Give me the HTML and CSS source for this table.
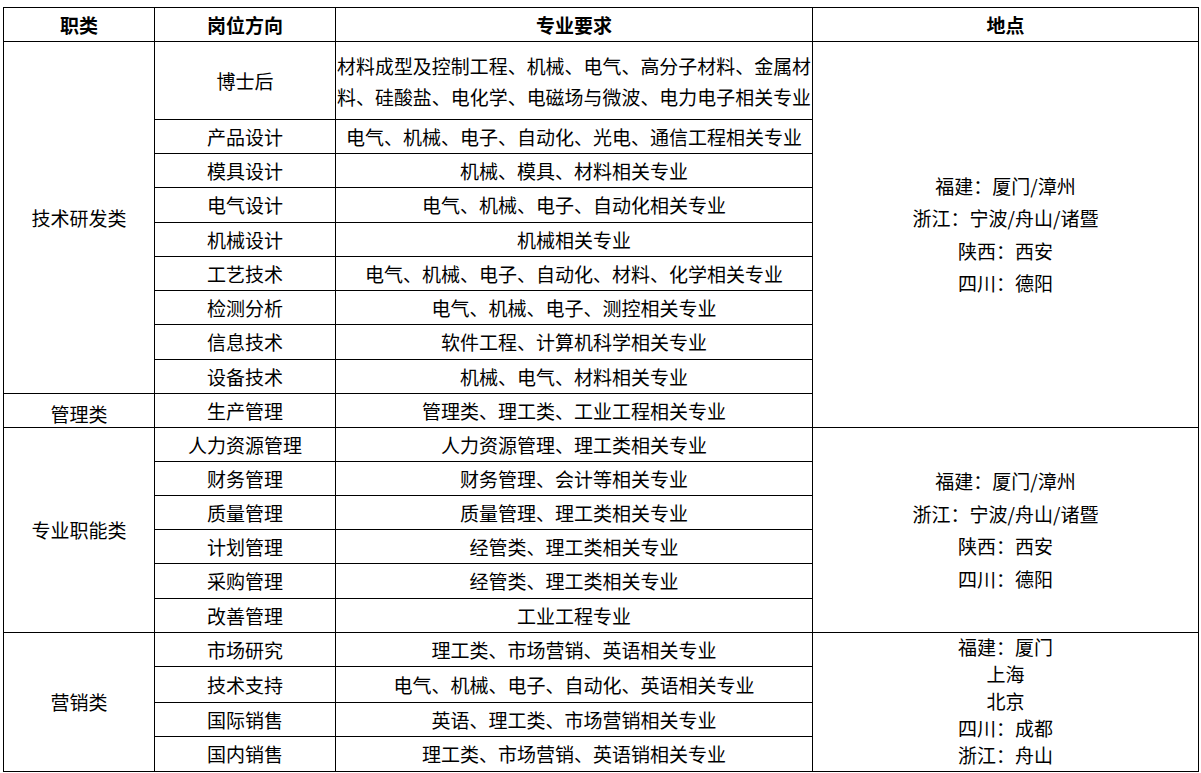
FILE: index.html
```html
<!DOCTYPE html>
<html lang="zh">
<head>
<meta charset="utf-8">
<link rel="stylesheet" href="styles.css">
<title>岗位</title>
</head>
<body>
<div class="sheet">
<table class="jobs">
<colgroup><col class="c1"><col class="c2"><col class="c3"><col class="c4"></colgroup>
<thead>
<tr class="h"><th>职类</th><th>岗位方向</th><th>专业要求</th><th>地点</th></tr>
</thead>
<tbody>
<tr class="tall"><td rowspan="9">技术研发类</td><td>博士后</td><td class="just">材料成型及控制工程、机械、电气、高分子材料、金属材<br>料、硅酸盐、电化学、电磁场与微波、电力电子相关专业</td>
<td rowspan="10" class="loc">福建：厦门/漳州<br>浙江：宁波/舟山/诸暨<br>陕西：西安<br>四川：德阳</td></tr>
<tr class="r"><td>产品设计</td><td>电气、机械、电子、自动化、光电、通信工程相关专业</td></tr>
<tr class="r"><td>模具设计</td><td>机械、模具、材料相关专业</td></tr>
<tr class="r5"><td>电气设计</td><td>电气、机械、电子、自动化相关专业</td></tr>
<tr class="r"><td>机械设计</td><td>机械相关专业</td></tr>
<tr class="r"><td>工艺技术</td><td>电气、机械、电子、自动化、材料、化学相关专业</td></tr>
<tr class="r"><td>检测分析</td><td>电气、机械、电子、测控相关专业</td></tr>
<tr class="r5"><td>信息技术</td><td>软件工程、计算机科学相关专业</td></tr>
<tr class="r"><td>设备技术</td><td>机械、电气、材料相关专业</td></tr>
<tr class="r"><td class="low">管理类</td><td>生产管理</td><td>管理类、理工类、工业工程相关专业</td></tr>
<tr class="r"><td rowspan="6">专业职能类</td><td>人力资源管理</td><td>人力资源管理、理工类相关专业</td>
<td rowspan="6" class="loc">福建：厦门/漳州<br>浙江：宁波/舟山/诸暨<br>陕西：西安<br>四川：德阳</td></tr>
<tr class="r"><td>财务管理</td><td>财务管理、会计等相关专业</td></tr>
<tr class="r"><td>质量管理</td><td>质量管理、理工类相关专业</td></tr>
<tr class="r"><td>计划管理</td><td>经管类、理工类相关专业</td></tr>
<tr class="r5"><td>采购管理</td><td>经管类、理工类相关专业</td></tr>
<tr class="r"><td>改善管理</td><td>工业工程专业</td></tr>
<tr class="r"><td rowspan="4">营销类</td><td>市场研究</td><td>理工类、市场营销、英语相关专业</td>
<td rowspan="4" class="loc small">福建：厦门<br>上海<br>北京<br>四川：成都<br>浙江：舟山</td></tr>
<tr class="r5"><td>技术支持</td><td>电气、机械、电子、自动化、英语相关专业</td></tr>
<tr class="r"><td>国际销售</td><td>英语、理工类、市场营销相关专业</td></tr>
<tr class="r"><td>国内销售</td><td>理工类、市场营销、英语销相关专业</td></tr>
</tbody>
</table>
</div>
</body>
</html>
```
FILE: styles.css
```css
html, body {
  margin: 0;
  padding: 0;
  background: #fff;
}
.sheet {
  padding: 7px 0 0 3px;
}
.jobs {
  border-collapse: collapse;
  table-layout: fixed;
  width: 1195px;
  font-family: "Noto Sans CJK SC", "Noto Sans", sans-serif;
  font-size: 19px;
  color: #000;
}
.c1 { width: 151px; }
.c2 { width: 181px; }
.c3 { width: 477px; }
.c4 { width: 386px; }
.jobs th, .jobs td {
  border: 1px solid #000;
  padding: 0;
  text-align: center;
  vertical-align: middle;
  line-height: 26px;
  white-space: nowrap;
  overflow: hidden;
}
.jobs th {
  font-weight: bold;
}
.h { height: 34px; }
.tall { height: 78px; }
.r { height: 34px; }
.r5 { height: 35px; }
.jobs td.just {
  text-align: justify;
  text-align-last: justify;
  line-height: 31px;
  font-size: 18.9px;
  padding: 0 1px;
  white-space: normal;
}
.jobs td.low {
  padding-top: 6px;
  line-height: 20px;
}
.jobs td.loc {
  line-height: 32.5px;
}
.jobs td.loc.small {
  line-height: 27px;
  padding-bottom: 3px;
}
```
